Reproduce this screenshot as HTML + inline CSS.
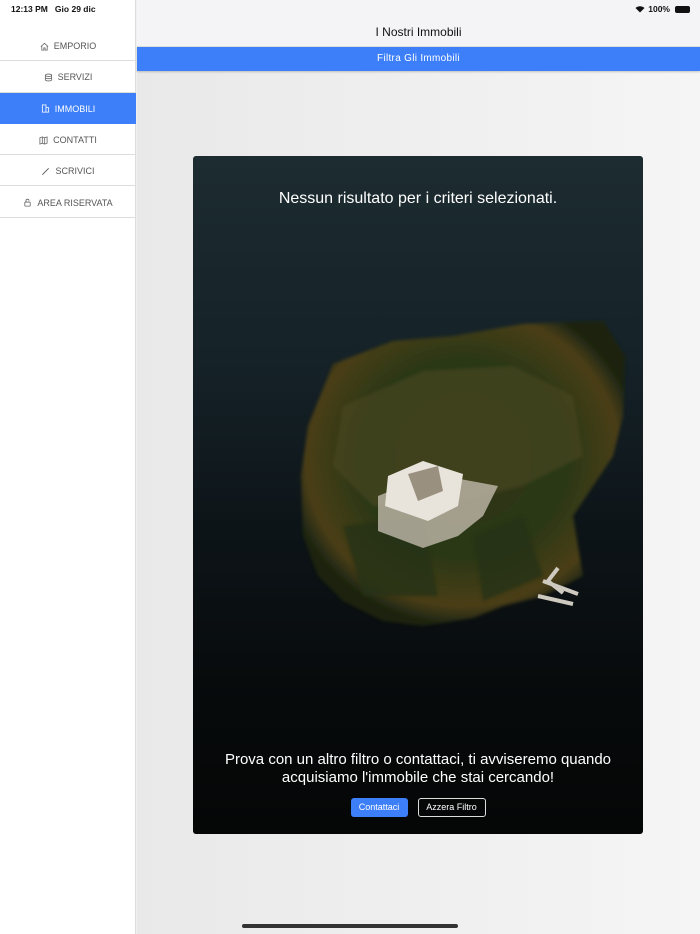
<!DOCTYPE html>
<html><head><meta charset="utf-8"><style>
*{margin:0;padding:0;box-sizing:border-box}
body{width:700px;height:934px;overflow:hidden;font-family:"Liberation Sans",sans-serif;background:#f0f0f0;position:relative}
.side{position:absolute;left:0;top:0;width:136px;height:934px;background:#fff;border-right:1px solid #ddd}
.st{position:absolute;left:11px;top:4px;font-size:8.5px;color:#111;font-weight:bold}
.menu{position:absolute;top:30px;left:0;width:136px}
.it{height:31.3px;border-bottom:1px solid #ddd;display:flex;align-items:center;justify-content:center;font-size:9px;color:#555;gap:5px;padding-top:2px}
.it.a{background:#3d7ff8;color:#fff;border-bottom-color:#3d7ff8}
.it svg{width:9px;height:9px}
.main{position:absolute;left:137px;top:0;right:0;bottom:0;background:linear-gradient(90deg,#e9e9e9,#f5f5f5)}
.hdr{height:47px;background:#f4f4f7;border-bottom:1px solid #ddd;text-align:center;position:relative}
.hdr .t{position:absolute;top:25px;width:100%;font-size:12px;color:#111}
.bar{height:24px;background:#3d7ff8;color:#fff;font-size:10px;text-align:center;line-height:24px;letter-spacing:.3px;box-shadow:0 1px 2px rgba(0,0,0,.2)}
.card{position:absolute;left:56px;top:156px;width:450px;height:678px;border-radius:3px;overflow:hidden;background:linear-gradient(180deg,#1d2c31 0%,#152228 30%,#0d1418 55%,#070a0b 80%,#050606 100%)}
.c1{position:absolute;top:34px;width:100%;text-align:center;color:#fff;font-size:16px}
.c2{position:absolute;top:595px;width:100%;text-align:center;color:#fff;font-size:15px;line-height:18px}
.btns{position:absolute;top:642px;width:100%;display:flex;justify-content:center;gap:10px}
.b{height:19px;font-size:9px;color:#fff;border-radius:3px;line-height:19px;white-space:nowrap;text-align:center}
.b1{background:#3d7ff8;width:57px}
.b2{border:1px solid #ddd;line-height:17px;width:68px}
.home{position:absolute;left:242px;top:924px;width:216px;height:4px;border-radius:2px;background:#333}
</style></head><body>
<div class="side">
<div class="st">12:13 PM&nbsp;&nbsp;&nbsp;Gio 29 dic</div>
<div class="menu">
<div class="it"><svg viewBox="0 0 10 10" fill="none" stroke="#666" stroke-width=".9"><path d="M1 5L5 1.5 9 5M2 4.2V9h2.3V6.5h1.4V9H8V4.2"/></svg>EMPORIO</div>
<div class="it"><svg viewBox="0 0 10 10" fill="none" stroke="#666" stroke-width=".9"><ellipse cx="5" cy="2.5" rx="3.5" ry="1.3"/><path d="M1.5 2.5v5c0 .7 1.6 1.3 3.5 1.3s3.5-.6 3.5-1.3v-5M1.5 5c0 .7 1.6 1.3 3.5 1.3S8.5 5.7 8.5 5"/></svg>SERVIZI</div>
<div class="it a"><svg viewBox="0 0 10 10" fill="none" stroke="#fff" stroke-width=".9"><path d="M1.5 9V1h4v8M5.5 4h3v5M1 9h8"/></svg>IMMOBILI</div>
<div class="it"><svg viewBox="0 0 10 10" fill="none" stroke="#666" stroke-width=".9"><path d="M1 2l2.7-1 2.6 1L9 1v7l-2.7 1-2.6-1L1 9zM3.7 1v7M6.3 2v7"/></svg>CONTATTI</div>
<div class="it"><svg viewBox="0 0 10 10" fill="none" stroke="#555" stroke-width="1"><path d="M1.5 8.5L8.5 1.5"/></svg>SCRIVICI</div>
<div class="it"><svg viewBox="0 0 10 10" fill="none" stroke="#666" stroke-width=".9"><rect x="2" y="4.5" width="6" height="4.5" rx=".5"/><path d="M3.3 4.5V3a1.7 1.7 0 013.4 0"/></svg>AREA RISERVATA</div>
</div></div>
<div class="main">
<div class="hdr"><div class="t">I Nostri Immobili</div>
<div style="position:absolute;right:10px;top:4px;font-size:8.5px;font-weight:bold;color:#111;display:flex;align-items:center;gap:3px">
<svg width="10" height="8" viewBox="0 0 10 8"><path d="M5 7.5L0.5 3a6.5 6.5 0 019 0z" fill="#111"/></svg>100%<span style="display:inline-block;width:15px;height:7px;background:#111;border-radius:2px;margin-left:2px"></span></div></div>
<div class="bar">Filtra Gli Immobili</div>
<div class="card">
<svg width="450" height="678" style="position:absolute;left:0;top:0">
<defs><radialGradient id="g" cx="50%" cy="45%" r="55%"><stop offset="0" stop-color="#2e3414"/><stop offset=".6" stop-color="#2c3814"/><stop offset=".88" stop-color="#4a3e18"/><stop offset="1" stop-color="#1a2410"/></radialGradient>
<filter id="bl"><feGaussianBlur stdDeviation="1.5"/></filter></defs>
<path filter="url(#bl)" fill="url(#g)" d="M140 208 L200 185 L260 180 L330 168 L410 165 L432 200 L430 260 L420 300 L400 330 L380 360 L390 420 L350 440 L310 450 L280 462 L230 470 L190 465 L150 445 L125 420 L110 380 L108 320 L115 270 Z"/>
<path filter="url(#bl)" fill="#4d4a20" opacity=".55" d="M150 250 L230 215 L320 210 L380 240 L390 300 L330 330 L250 350 L180 350 L140 310Z"/>
<path filter="url(#bl)" fill="#263212" opacity=".8" d="M150 370 L230 360 L245 440 L170 440Z M280 380 L330 360 L350 420 L290 445Z"/>
<path fill="#b8b1a2" opacity=".85" d="M185 340 L240 318 L305 330 L290 360 L265 380 L230 392 L185 375 Z"/>
<path fill="#e8e4dc" d="M195 320 L230 305 L270 318 L265 350 L235 365 L192 350 Z"/>
<path fill="#9a9080" d="M215 318 L245 310 L250 335 L225 345Z"/>
<path stroke="#cfcac0" stroke-width="4" fill="none" d="M365 412 L355 425 L370 437 M345 440 L380 448 M350 425 L385 438"/>
</svg>
<div class="c1">Nessun risultato per i criteri selezionati.</div>
<div class="c2">Prova con un altro filtro o contattaci, ti avviseremo quando<br>acquisiamo l'immobile che stai cercando!</div>
<div class="btns"><div class="b b1">Contattaci</div><div class="b b2">Azzera Filtro</div></div>
</div>
</div>
<div class="home"></div>
</body></html>
